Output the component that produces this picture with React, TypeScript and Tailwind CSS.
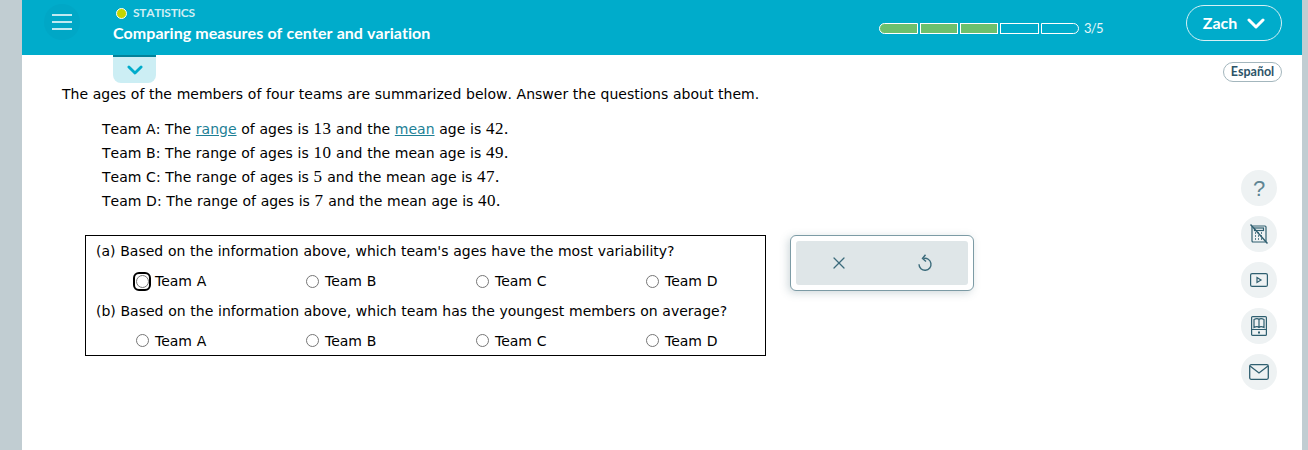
import { X } from 'lucide-react'

const headerFont = "font-['Lato','Open_Sans',sans-serif]"
const bodyFont = "font-['DejaVu_Sans',sans-serif] [font-kerning:none] [word-spacing:0.25px]"
const numFont = "font-['Liberation_Serif',serif] text-[17px] tracking-[0.5px]"

const teams = [
  { name: 'B', range: '10', mean: '49' },
  { name: 'C', range: '5', mean: '47' },
  { name: 'D', range: '7', mean: '40' },
]

function Chevron({ w, h, sw }: { w: number; h: number; sw: number }) {
  return (
    <svg width={w} height={h} viewBox={`0 0 ${w} ${h}`} fill="none" stroke="currentColor" strokeWidth={sw} strokeLinecap="round" strokeLinejoin="round">
      <path d={`M${sw / 2 + 0.5} ${sw / 2 + 0.5}L${w / 2} ${h - sw / 2 - 0.5}L${w - sw / 2 - 0.5} ${sw / 2 + 0.5}`} />
    </svg>
  )
}

function Radio({ label, focused }: { label: string; focused?: boolean }) {
  return (
    <label className="flex items-center">
      <span className={focused ? 'flex h-[19px] w-[18px] items-center justify-center rounded-[6px] border-2 border-black' : 'flex h-[19px] w-[18px] items-center justify-center'}>
        <span className="h-[13px] w-[13px] shrink-0 rounded-full border border-[#767676] bg-white" />
      </span>
      <span className="pl-[4px] [font-kerning:normal]">{label}</span>
    </label>
  )
}

function RadioRow({ focused, last }: { focused?: boolean; last?: boolean }) {
  return (
    <div className={last ? 'grid h-[29px] grid-cols-[170px_170px_170px_1fr] items-center pl-[47px]' : 'grid h-[30px] grid-cols-[170px_170px_170px_1fr] items-center pl-[47px]'}>
      <Radio label="Team A" focused={focused} />
      <Radio label="Team B" />
      <Radio label="Team C" />
      <Radio label="Team D" />
    </div>
  )
}

function SideButton({ children }: { children: React.ReactNode }) {
  return (
    <div className="flex h-9 w-9 items-center justify-center rounded-full bg-[#eef2f3] text-[#2f5f70]">
      {children}
    </div>
  )
}

export default function App() {
  return (
    <div className={`h-[450px] w-[1308px] overflow-hidden bg-[#c1cdd2] pl-[22px] ${bodyFont}`}>
      <div className="flex h-full w-[1280px] flex-col bg-white">
        {/* Header */}
        <header className={`flex h-[55px] shrink-0 items-start bg-[#00accb] text-white ${headerFont}`}>
          <div className="ml-[22px] mt-[4px] flex h-9 w-9 items-center justify-center rounded-full bg-[#00a7c6]">
            <svg width="20" height="16" viewBox="0 0 20 16" stroke="white" strokeWidth="1.5">
              <path d="M0 1h20M0 8h20M0 15h20" />
            </svg>
          </div>
          <div className="ml-[33px] flex-1 pt-[6px]">
            <div className="flex items-center pl-[3px] text-[12px] font-bold leading-[14px] tracking-[-0.3px] text-[#d0eef4]">
              <span className="mr-[6px] h-[11px] w-[11px] rounded-full border border-white bg-[#c4d600]" />
              STATISTICS
            </div>
            <div className="mt-[3px] text-[16px] font-bold leading-[20px] tracking-[0.03px]">Comparing measures of center and variation</div>
          </div>
          <div className="mt-[23px] flex items-center">
            <div className="h-[11px] w-[39px] rounded-l-full border border-white bg-[#6cc06d]" />
            <div className="ml-[2px] h-[11px] w-[38px] border border-white bg-[#6cc06d]" />
            <div className="ml-[2px] h-[11px] w-[38px] border border-white bg-[#6cc06d]" />
            <div className="ml-[2px] h-[11px] w-[39px] border border-white" />
            <div className="ml-[2px] h-[11px] w-[38px] rounded-r-full border border-white" />
            <span className="ml-[5px] w-[18px] whitespace-nowrap text-[13px] leading-[11px] tracking-[-0.7px] text-[#e6f7fa]">3/5</span>
          </div>
          <button className="ml-[84px] mr-[20px] mt-[5px] flex h-9 w-[96px] items-center justify-center gap-[10px] rounded-full border border-[#d5f0f5] text-[16px] font-bold">
            Zach
            <Chevron w={18} h={11} sw={3} />
          </button>
        </header>

        <div className="flex flex-1">
          {/* Main */}
          <main className="w-[1180px] text-[14px] leading-[24px] text-black">
            <div className="ml-[91px] flex h-[28px] w-[43px] items-center justify-center rounded-b-[8px] border-t-2 border-[#00829a] bg-[#cceef4] pb-[1px] text-[#00accb]">
              <Chevron w={16} h={10} sw={2.8} />
            </div>
            <p className="-mt-[1px] ml-[40px]">The ages of the members of four teams are summarized below. Answer the questions about them.</p>
            <div className="ml-[80px] mt-[11px]">
              <p>
                Team A: The <a className="text-[#1d7f96] underline">range</a> of ages is <span className={numFont}>13</span> and the{' '}
                <a className="text-[#1d7f96] underline">mean</a> age is <span className={numFont}>42.</span>
              </p>
              {teams.map((t) => (
                <p key={t.name}>
                  Team {t.name}: The range of ages is <span className={numFont}>{t.range}</span> and the mean age is <span className={numFont}>{t.mean}.</span>
                </p>
              ))}
            </div>
            <div className="mt-[22px] flex items-start">
              <div className="ml-[63px] h-[121px] w-[681px] border border-black">
                <div className="flex h-[30px] items-center whitespace-pre pl-[10px]">(a) Based on the information above, which team's ages have the most variability?</div>
                <RadioRow focused />
                <div className="flex h-[30px] items-center whitespace-pre pl-[10px]">(b) Based on the information above, which team has the youngest members on average?</div>
                <RadioRow last />
              </div>
              <div className="ml-[24px] h-[56px] w-[184px] rounded-[6px] border border-[#7c9ba5] bg-white p-[5px] shadow-[-2px_2px_8px_rgba(100,130,140,0.3)]">
                <div className="flex h-[44px] items-center rounded-[3px] bg-[#dfe6e8] text-[#3b6b7b]">
                  <X className="ml-[33px]" size={20} strokeWidth={1.5} />
                  <svg className="ml-[68px]" width="16" height="18" viewBox="0 0 16 18" fill="none" stroke="currentColor" strokeWidth="1.4">
                    <path d="M6.5 4.5a6 6 0 1 1-4.5 5.8" />
                    <path d="M8.5 0.8L5.5 4.5l3.5 3" />
                  </svg>
                </div>
              </div>
            </div>
          </main>

          {/* Right rail */}
          <aside className="flex flex-1 flex-col items-end pr-[20px] pt-[7px]">
            <div className={`flex h-[20px] w-[59px] items-center justify-center rounded-full border border-[#a3b6bd] text-[12.5px] font-bold text-[#2c5468] ${headerFont}`}>
              Español
            </div>
            <div className="mr-[5px] mt-[88px] flex flex-col gap-[10px]">
              <SideButton>
                <span className="font-['Liberation_Sans',sans-serif] text-[22px] text-[#5f8593]">?</span>
              </SideButton>
              <SideButton>
                <svg width="18" height="20" viewBox="0 0 18 20" fill="none" stroke="currentColor" strokeWidth="1.2">
                  <rect x="2" y="2" width="14" height="16" rx="1" />
                  <rect x="4.5" y="4" width="9" height="2.5" />
                  <path d="M5 9h1M8 9h1M11 9h1M5 12h1M8 12h1M11 12h1M5 15h1M8 15h1M11 15h1" strokeWidth="1.5" />
                  <path d="M0.5 0.5L17.5 19.5" strokeWidth="1.5" />
                </svg>
              </SideButton>
              <SideButton>
                <svg width="18" height="14" viewBox="0 0 18 14" fill="none" stroke="currentColor" strokeWidth="1.2">
                  <rect x="0.6" y="0.6" width="16.8" height="12.8" rx="1.5" />
                  <path d="M7 4.5l4 2.5-4 2.5z" />
                </svg>
              </SideButton>
              <SideButton>
                <svg width="16" height="20" viewBox="0 0 16 20" fill="none" stroke="currentColor" strokeWidth="1.2">
                  <rect x="0.6" y="0.6" width="14.8" height="18.8" rx="1" />
                  <path d="M3 3.5c2-1 4-1 5 0c1-1 3-1 5 0v8c-2-1-4-1-5 0c-1-1-3-1-5 0zM8 3.5v8M0.6 13.5h14.8" />
                  <rect x="7" y="15.5" width="2" height="2" fill="currentColor" stroke="none" />
                </svg>
              </SideButton>
              <SideButton>
                <svg width="20" height="16" viewBox="0 0 20 16" fill="none" stroke="currentColor" strokeWidth="1.3">
                  <rect x="0.7" y="0.7" width="18.6" height="14.6" rx="1.5" />
                  <path d="M1 2l9 7 9-7" />
                </svg>
              </SideButton>
            </div>
          </aside>
        </div>
      </div>
    </div>
  )
}
